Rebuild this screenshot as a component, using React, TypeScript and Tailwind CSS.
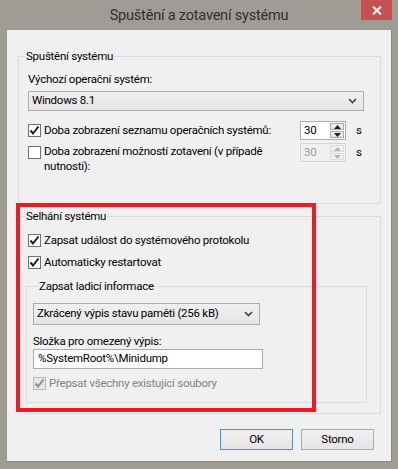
import React from "react";

function Check({ disabled = false }: { disabled?: boolean }) {
  return (
    <svg width="11" height="11" viewBox="0 0 11 11" className="block">
      <path
        d="M1.5 5.5 L4 8.5 L9.5 1.5"
        fill="none"
        stroke={disabled ? "#8d8d8d" : "#1a1a1a"}
        strokeWidth="2"
      />
    </svg>
  );
}

function CheckBox({ checked, disabled = false }: { checked: boolean; disabled?: boolean }) {
  return (
    <div
      className={
        "w-[13px] h-[13px] shrink-0 flex items-center justify-center border " +
        (disabled ? "border-[#bcbcbc] bg-[#e6e6e6]" : "border-[#707070] bg-white")
      }
    >
      {checked && <Check disabled={disabled} />}
    </div>
  );
}

function Chevron() {
  return (
    <svg width="9" height="6" viewBox="0 0 9 6" className="block">
      <path d="M1 1 L4.5 4.5 L8 1" fill="none" stroke="#404040" strokeWidth="1.6" />
    </svg>
  );
}

function Combo({ text, w, h }: { text: string; w: string; h: string }) {
  return (
    <div
      className={
        w +
        " " +
        h +
        " border border-[#acacac] bg-gradient-to-b from-[#f0f0f0] to-[#e5e5e5] flex items-center pl-[3px] pr-[6px]"
      }
    >
      <span className="flex-1">{text}</span>
      <Chevron />
    </div>
  );
}

function Spinner({ disabled = false }: { disabled?: boolean }) {
  const arrow = disabled ? "#b4b4b4" : "#202020";
  return (
    <div
      className={
        "w-[46px] h-[19px] border flex items-stretch " +
        (disabled ? "border-[#d5d5d5] bg-[#f0f0f0] text-[#9a9a9a]" : "border-[#abadb3] bg-white text-black")
      }
    >
      <span className="flex-1 pl-[3px] leading-[17px]">30</span>
      <div className="w-[16px] flex flex-col gap-[1px] p-[1px]">
        <div
          className={
            "flex-1 flex items-center justify-center border " +
            (disabled ? "border-[#dcdcdc] bg-[#f0f0f0]" : "border-[#acacac] bg-gradient-to-b from-[#f2f2f2] to-[#e2e2e2]")
          }
        >
          <svg width="7" height="4" viewBox="0 0 7 4" className="block">
            <path d="M0 4 L3.5 0 L7 4 Z" fill={arrow} />
          </svg>
        </div>
        <div
          className={
            "flex-1 flex items-center justify-center border " +
            (disabled ? "border-[#dcdcdc] bg-[#f0f0f0]" : "border-[#acacac] bg-gradient-to-b from-[#f2f2f2] to-[#e2e2e2]")
          }
        >
          <svg width="7" height="4" viewBox="0 0 7 4" className="block">
            <path d="M0 0 L3.5 4 L7 0 Z" fill={arrow} />
          </svg>
        </div>
      </div>
    </div>
  );
}

export default function App() {
  return (
    <div className="relative w-[398px] h-[469px] bg-[#9f9b95] flex flex-col font-['Roboto',sans-serif] text-[11.5px] tracking-[-0.25px] text-black overflow-hidden">
      {/* title bar */}
      <div className="relative h-[30px] flex items-center justify-center shrink-0">
        <span className="text-[14.5px] tracking-[-0.2px] text-[#2f2f2f] leading-[20px] pt-[1px]">Spuštění a zotavení systému</span>
        <div className="absolute right-[6px] top-0 w-[31px] h-[20px] bg-[#c75050] flex items-center justify-center">
          <svg width="10" height="9" viewBox="0 0 10 9" className="block">
            <path d="M1 0.5 L9 8.5 M9 0.5 L1 8.5" stroke="white" strokeWidth="2" />
          </svg>
        </div>
      </div>

      {/* client area */}
      <div className="ml-[7px] w-[385px] h-[432px] bg-[#f0f0f0] border-r border-b border-[#8a8782] flex flex-col pl-[11px] pr-[10px]">
        {/* group 1 */}
        <fieldset className="mt-[19px] h-[155px] border border-[#dcdcdc] pl-[9px] pr-[16px]">
          <legend className="ml-[-3px] px-[1px] leading-[15px]">Spuštění systému</legend>
          <div className="mt-[8px] leading-[15px]">Výchozí operační systém:</div>
          <div className="mt-[4px]">
            <Combo text="Windows 8.1" w="w-[336px]" h="h-[20px]" />
          </div>
          <div className="mt-[10px] flex items-center h-[19px]">
            <div className="w-[272px] flex items-center gap-[3px]">
              <CheckBox checked />
              <span className="leading-[15px]">Doba zobrazení seznamu operačních systémů:</span>
            </div>
            <Spinner />
            <span className="ml-[10px]">s</span>
          </div>
          <div className="mt-[3px] flex items-start">
            <div className="w-[272px] flex items-start gap-[3px] pt-[3px]">
              <CheckBox checked={false} />
              <span className="leading-[15px] mt-[-2px]">
                Doba zobrazení možností zotavení (v případě
                <br />
                nutnosti):
              </span>
            </div>
            <Spinner disabled />
            <span className="ml-[10px] leading-[19px]">s</span>
          </div>
        </fieldset>

        {/* group 2 */}
        <fieldset className="mt-[5px] h-[205px] border border-[#dcdcdc] pl-[9px]">
          <legend className="ml-[-3px] px-[1px] leading-[15px]">Selhání systému</legend>
          <div className="mt-[9px] flex items-center gap-[3px] h-[15px]">
            <CheckBox checked />
            <span>Zapsat událost do systémového protokolu</span>
          </div>
          <div className="mt-[7px] flex items-center gap-[3px] h-[15px]">
            <CheckBox checked />
            <span>Automaticky restartovat</span>
          </div>
          <fieldset className="mt-[9px] ml-[-2px] mr-[13px] h-[124px] border border-[#dcdcdc] pl-[6px]">
            <legend className="ml-[5px] px-[1px] leading-[15px]">Zapsat ladicí informace</legend>
            <div className="mt-[9px]">
              <Combo text="Zkrácený výpis stavu paměti (256 kB)" w="w-[227px]" h="h-[22px]" />
            </div>
            <div className="mt-[9px] leading-[15px]">Složka pro omezený výpis:</div>
            <div className="w-[230px] h-[20px] border border-[#abadb3] bg-white flex items-center pl-[4px]">
              %SystemRoot%\Minidump
            </div>
            <div className="mt-[7px] flex items-center gap-[3px] h-[15px] text-[#838383]">
              <CheckBox checked disabled />
              <span>Přepsat všechny existující soubory</span>
            </div>
          </fieldset>
        </fieldset>

        {/* buttons */}
        <div className="mt-[15px] flex justify-end gap-[8px] pr-[7px]">
          <div className="w-[73px] h-[21px] border border-[#3399ff] bg-gradient-to-b from-[#f0f0f0] to-[#e5e5e5] flex items-center justify-center">
            OK
          </div>
          <div className="w-[73px] h-[21px] border border-[#acacac] bg-gradient-to-b from-[#f0f0f0] to-[#e5e5e5] flex items-center justify-center">
            Storno
          </div>
        </div>
      </div>

      {/* red highlight annotation */}
      <div className="absolute left-[16px] top-[203px] w-[300px] h-[209px] border-[4px] border-[#ed1c24] pointer-events-none" />
    </div>
  );
}
